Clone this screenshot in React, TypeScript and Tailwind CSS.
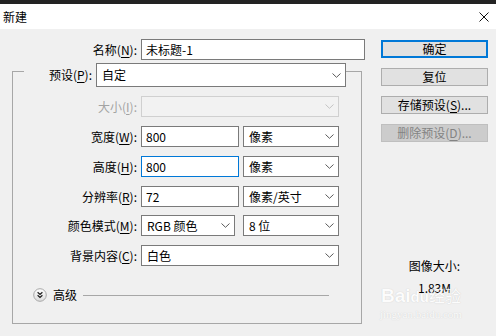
import React from "react";

const Chevron = ({ light = false }: { light?: boolean }) => (
  <svg width="9" height="5" viewBox="0 0 9 5" className="shrink-0">
    <path d="M0.5 0.5 L4.5 4.3 L8.5 0.5" fill="none" stroke={light ? "#c4c4c4" : "#5a5a5a"} strokeWidth="1" />
  </svg>
);

const U = ({ children }: { children: React.ReactNode }) => (
  <span className="underline underline-offset-[2px] decoration-[1px]">{children}</span>
);

const Label = ({ children, disabled = false }: { children: React.ReactNode; disabled?: boolean }) => (
  <div className={`w-[124px] text-right whitespace-nowrap ${disabled ? "text-[#a3a3a3]" : "text-black"}`}>{children}</div>
);

const Box = ({ w, text, focus = false }: { w: string; text: string; focus?: boolean }) => (
  <div
    className={`${w} h-[21px] bg-white border flex items-center pl-[4px] ${focus ? "border-[#0078d7]" : "border-[#7a7a7a]"}`}
  >
    {text}
  </div>
);

const Select = ({ w, text, h = "h-[21px]" }: { w: string; text: string; h?: string }) => (
  <div className={`${w} ${h} bg-white border border-[#7a7a7a] flex items-center justify-between pl-[5px] pr-[4px]`}>
    <span className="whitespace-nowrap">{text}</span>
    <Chevron />
  </div>
);

const Btn = ({ children, primary = false, disabled = false }: { children: React.ReactNode; primary?: boolean; disabled?: boolean }) => (
  <div
    className={`w-[107px] h-[18px] flex items-center justify-center whitespace-nowrap ${
      primary
        ? "border-2 border-[#0078d7] bg-[#e1e1e1] text-black"
        : disabled
        ? "border border-[#bfbfbf] bg-[#cccccc] text-[#838383]"
        : "border border-[#adadad] bg-[#e1e1e1] text-black"
    }`}
  >
    {children}
  </div>
);

export default function App() {
  return (
    <div className="relative w-[496px] h-[336px] overflow-hidden bg-[#f0f0f0] font-['Noto_Sans_CJK_SC',sans-serif] text-[12px] leading-[16px] text-black">
      <div className="h-[4px] bg-[#232323]" />
      <div className="h-[25px] bg-white flex items-center justify-between pl-[3px] pr-[7px]">
        <span className="text-[12px]">新建</span>
        <svg width="10" height="10" viewBox="0 0 10 10">
          <path d="M0.5 0.5 L9.5 9.5 M9.5 0.5 L0.5 9.5" stroke="#111" strokeWidth="1" />
        </svg>
      </div>

      <div className="flex pt-[10px]">
        {/* left column */}
        <div className="w-[365px] flex flex-col">
          <div className="flex items-center gap-[4px]">
            <div className="w-[137px] text-right whitespace-nowrap">
              名称(<U>N</U>):
            </div>
            <Box w="w-[224px]" text="未标题-1" />
          </div>

          <fieldset className="ml-[12px] mt-[-5px] w-[350px] border border-[#a7a7a7] p-0 pb-[21px] m-0">
            <legend className="ml-[11px] mr-[6px] pt-[8px] p-0">
              <div className="flex items-center gap-[4px]">
                <div className="w-[68px] text-right whitespace-nowrap">
                  预设(<U>P</U>):
                </div>
                <Select w="w-[250px]" h="h-[24px]" text="自定" />
              </div>
            </legend>

            <div className="flex items-center gap-[4px] mt-[9px]">
              <Label disabled>
                大小(<U>I</U>):
              </Label>
              <div className="w-[198px] h-[21px] border border-[#d0d0d0] bg-[#f2f2f2] flex items-center justify-end pr-[4px]">
                <Chevron light />
              </div>
            </div>

            <div className="flex items-center gap-[4px] mt-[9px]">
              <Label>
                宽度(<U>W</U>):
              </Label>
              <Box w="w-[98px]" text="800" />
              <Select w="w-[96px]" text="像素" />
            </div>

            <div className="flex items-center gap-[4px] mt-[9px]">
              <Label>
                高度(<U>H</U>):
              </Label>
              <Box w="w-[98px]" text="800" focus />
              <Select w="w-[96px]" text="像素" />
            </div>

            <div className="flex items-center gap-[4px] mt-[9px]">
              <Label>
                分辨率(<U>R</U>):
              </Label>
              <Box w="w-[98px]" text="72" />
              <Select w="w-[96px]" text="像素/英寸" />
            </div>

            <div className="flex items-center gap-[4px] mt-[8px]">
              <Label>
                颜色模式(<U>M</U>):
              </Label>
              <Select w="w-[94px]" text="RGB 颜色" />
              <div className="ml-[4px]">
                <Select w="w-[96px]" text="8 位" />
              </div>
            </div>

            <div className="flex items-center gap-[4px] mt-[9px]">
              <Label>
                背景内容(<U>C</U>):
              </Label>
              <Select w="w-[198px]" text="白色" />
            </div>

            <div className="flex items-center mt-[22px] ml-[20px] mr-[32px] h-[14px]">
              <svg width="14" height="14" viewBox="0 0 14 14" className="shrink-0">
                <defs>
                  <linearGradient id="g" x1="0" y1="0" x2="0" y2="1">
                    <stop offset="0" stopColor="#ffffff" />
                    <stop offset="1" stopColor="#dcdcdc" />
                  </linearGradient>
                </defs>
                <circle cx="7" cy="7" r="6.3" fill="url(#g)" stroke="#a8a8a8" strokeWidth="1" />
                <path d="M4.6 4.3 L7 6.5 L9.4 4.3 M4.6 7.3 L7 9.5 L9.4 7.3" fill="none" stroke="#222" strokeWidth="1.2" />
              </svg>
              <span className="ml-[6px] whitespace-nowrap">高级</span>
              <div className="flex-1 ml-[6px] h-px bg-[#a7a7a7]" />
            </div>
          </fieldset>
        </div>

        {/* right column */}
        <div className="ml-[16px] flex flex-col gap-[10px] pt-[1px]">
          <Btn primary>确定</Btn>
          <Btn>复位</Btn>
          <Btn>
            存储预设(<U>S</U>)...
          </Btn>
          <Btn disabled>
            删除预设(<U>D</U>)...
          </Btn>
          <div className="mt-[106px] flex flex-col items-center gap-[6px]">
            <span>图像大小:</span>
            <span>1.83M</span>
          </div>
        </div>
      </div>

      <div className="absolute left-[380px] top-[284px] flex flex-col items-center text-white opacity-80 pointer-events-none [text-shadow:0_0_1px_#bdbdbd]">
        <span className="text-[19px] leading-[22px] font-bold font-['Liberation_Sans',sans-serif]">
          Bai<span className="text-[15px]">du</span>
          <span className="font-['Noto_Sans_CJK_SC',sans-serif] font-normal text-[16px]">经验</span>
        </span>
        <span className="text-[11px] leading-[13px] font-['Liberation_Serif',serif]">jingyan.baidu.com</span>
      </div>
    </div>
  );
}
